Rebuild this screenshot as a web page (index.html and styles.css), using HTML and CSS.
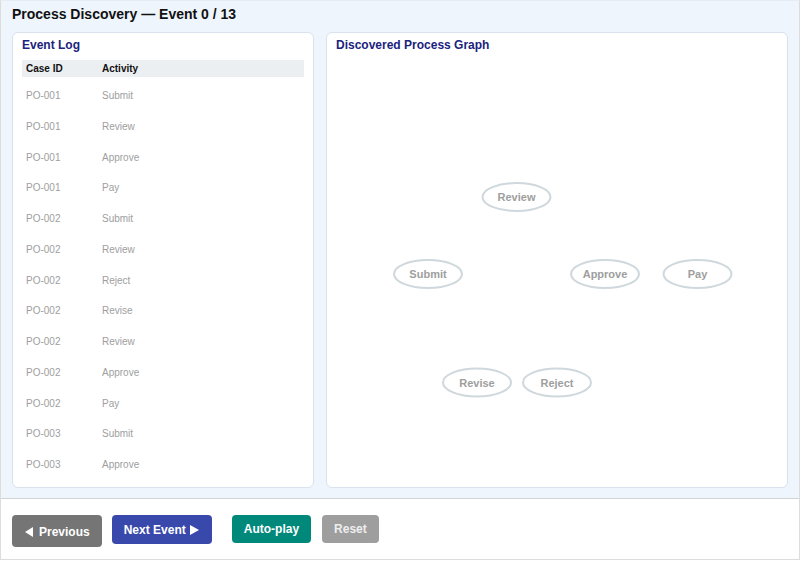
FILE: index.html
```html
<!DOCTYPE html>
<html lang="en">
<head>
    <meta charset="UTF-8">
    <meta name="viewport" content="width=device-width, initial-scale=1.0">
    <title>Process Discovery</title>
    <link rel="stylesheet" href="styles.css">
</head>
<body>

<div class="app">
    <div class="top">
        <h1 class="title">Process Discovery — Event 0 / 13</h1>
        <div class="panels">
            <div class="panel log-panel">
                <h2 class="panel-title">Event Log</h2>
                <div class="log-head"><span>Case ID</span><span>Activity</span></div>
                <div class="log-row"><span>PO-001</span><span>Submit</span></div>
                <div class="log-row"><span>PO-001</span><span>Review</span></div>
                <div class="log-row"><span>PO-001</span><span>Approve</span></div>
                <div class="log-row"><span>PO-001</span><span>Pay</span></div>
                <div class="log-row"><span>PO-002</span><span>Submit</span></div>
                <div class="log-row"><span>PO-002</span><span>Review</span></div>
                <div class="log-row"><span>PO-002</span><span>Reject</span></div>
                <div class="log-row"><span>PO-002</span><span>Revise</span></div>
                <div class="log-row"><span>PO-002</span><span>Review</span></div>
                <div class="log-row"><span>PO-002</span><span>Approve</span></div>
                <div class="log-row"><span>PO-002</span><span>Pay</span></div>
                <div class="log-row"><span>PO-003</span><span>Submit</span></div>
                <div class="log-row"><span>PO-003</span><span>Approve</span></div>
            </div>
            <div class="panel graph-panel">
                <h2 class="panel-title">Discovered Process Graph</h2>
                <svg class="graph" viewBox="0 0 460 454">
                    <g class="node"><ellipse cx="189.5" cy="164" rx="34" ry="14"/><text x="189.5" y="168">Review</text></g>
                    <g class="node"><ellipse cx="101" cy="241" rx="34" ry="14"/><text x="101" y="245">Submit</text></g>
                    <g class="node"><ellipse cx="278" cy="241" rx="34" ry="14"/><text x="278" y="245">Approve</text></g>
                    <g class="node"><ellipse cx="370.5" cy="241" rx="34" ry="14"/><text x="370.5" y="245">Pay</text></g>
                    <g class="node"><ellipse cx="150" cy="349.5" rx="34" ry="14"/><text x="150" y="353.5">Revise</text></g>
                    <g class="node"><ellipse cx="230" cy="349.5" rx="34" ry="14"/><text x="230" y="353.5">Reject</text></g>
                </svg>
            </div>
        </div>
    </div>

    <div class="controls">
        <button class="btn btn-prev">
            <svg width="8" height="10" viewBox="0 0 8 10"><polygon points="8,0 8,10 0,5" fill="#fff"/></svg>
            Previous
        </button>
        <button class="btn btn-next">
            Next Event
            <svg width="9" height="10" viewBox="0 0 9 10"><polygon points="0,0 9,5 0,10" fill="#fff"/></svg>
        </button>
        <button class="btn btn-auto">Auto-play</button>
        <button class="btn btn-reset">Reset</button>
    </div>
</div>

</body>
</html>
```

FILE: styles.css
```css
body {
    margin: 0;
    font-family: "Liberation Sans", Arial, sans-serif;
    background: #fff;
}
.app {
    width: 800px;
    height: 560px;
    box-sizing: border-box;
    border: 1px solid #dcdcdc;
    border-top-color: #e4ecf4;
}
.top {
    background: #eef5fd;
    padding: 5px 11px 10px;
    border-bottom: 1px solid #d4d4d4;
}
.title {
    margin: 0 0 10px;
    font-size: 14px;
    line-height: 16px;
    font-weight: bold;
    color: #111;
}
.panels {
    display: flex;
    gap: 12px;
    height: 456px;
}
.panel {
    background: #fff;
    border: 1px solid #d9e2eb;
    border-radius: 6px;
    padding: 5px 9px 9px;
    box-sizing: border-box;
}
.log-panel {
    flex: 0 0 302px;
}
.graph-panel {
    flex: 1;
    position: relative;
}
.panel-title {
    margin: 0 0 8px;
    font-size: 12px;
    line-height: 14px;
    font-weight: bold;
    color: #1a237e;
}
.log-head, .log-row {
    display: grid;
    grid-template-columns: 76px 1fr;
    font-size: 10px;
    line-height: 13px;
}
.log-head {
    background: #eceff1;
    font-weight: bold;
    color: #111;
}
.log-head span {
    padding: 2px 4px;
}
.log-row {
    color: #9e9e9e;
}
.log-row span {
    padding: 12px 4px 5.75px;
}
.graph {
    position: absolute;
    left: 0;
    top: 0;
    width: 100%;
    height: 100%;
}
.node ellipse {
    fill: #fff;
    stroke: #cfd8dc;
    stroke-width: 2;
}
.node text {
    font-family: "Liberation Sans", Arial, sans-serif;
    font-size: 11px;
    font-weight: bold;
    fill: #9e9e9e;
    text-anchor: middle;
}
.controls {
    display: flex;
    align-items: flex-start;
    padding: 16px 11px 0;
}
.btn {
    display: flex;
    align-items: center;
    border: none;
    border-radius: 4px;
    color: #fff;
    font-family: "Liberation Sans", Arial, sans-serif;
    font-size: 12px;
    font-weight: bold;
    padding: 0 12px;
    cursor: pointer;
}
.btn-prev {
    background: #757575;
    height: 32px;
    padding-left: 13px;
    padding-top: 2px;
    margin-right: 10px;
}
.btn-prev svg {
    margin-right: 6px;
}
.btn-next {
    background: #3949ab;
    height: 29px;
    padding-right: 13px;
    margin-right: 20px;
}
.btn-next svg {
    margin-left: 4px;
}
.btn-auto {
    background: #00897b;
    height: 28px;
    margin-right: 11px;
}
.btn-reset {
    background: #9e9e9e;
    color: #eeeeee;
    height: 28px;
}
```
